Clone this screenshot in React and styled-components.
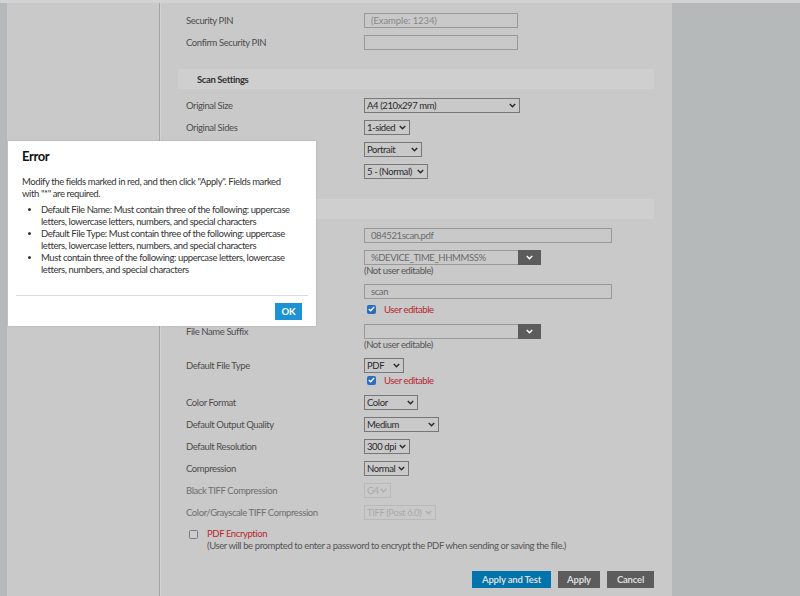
import React from 'react';
import styled, { createGlobalStyle } from 'styled-components';

const GlobalStyle = createGlobalStyle`
  html, body {
    margin: 0;
    padding: 0;
    background: #b6b9ba;
  }
  body {
    font-family: Lato, "Liberation Sans", Arial, sans-serif;
    font-size: 9.5px;
    letter-spacing: -0.4px;
  }
`;

const Root = styled.div`
  position: relative;
  width: 800px;
  height: 596px;
  overflow: hidden;
`;

const Page = styled.div`
  display: flex;
  height: 596px;
  box-sizing: border-box;
  border-top: 3px solid #d2d3d3;
  padding-left: 7px;
  background: #b6b9ba;
`;

const Nav = styled.div`
  width: 152px;
  background: #c9c9c9;
  border-right: 1px solid #a4a4a4;
`;

const Main = styled.div`
  width: 512px;
  box-sizing: border-box;
  padding: 7px 18px 0 17px;
  background: #c9c9c9;
  border-left: 1px solid #d3d3d3;
  display: flex;
  flex-direction: column;
`;

const Band = styled.div`
  height: 20px;
  margin: ${(p) => p.$top}px 0 6px;
  padding-left: 19px;
  display: flex;
  align-items: center;
  background: #cfcfcf;
  color: #333;
  font-weight: bold;
`;

const Row = styled.div`
  display: grid;
  grid-template-columns: 178px 1fr;
  padding: 3px 0 4px 8px;
  align-items: start;
`;

const Label = styled.div`
  height: 15px;
  line-height: 15px;
  color: ${(p) => (p.$muted ? '#6f6f6f' : '#4d4d4d')};
`;

const Field = styled.div`
  display: flex;
  flex-direction: column;
  align-items: flex-start;
`;

const TextBox = styled.div`
  width: ${(p) => p.$w}px;
  height: 15px;
  box-sizing: border-box;
  border: 1px solid #999;
  padding-left: 6px;
  line-height: 13px;
  color: ${(p) => (p.$placeholder ? '#878787' : '#6a6a6a')};
  letter-spacing: ${(p) => (p.$placeholder ? '-0.1px' : 'inherit')};
`;

const SelectBox = styled.div`
  width: ${(p) => p.$w}px;
  height: 15px;
  box-sizing: border-box;
  border: 1px solid ${(p) => (p.$disabled ? '#b9b9b9' : '#777')};
  padding: 0 3px 0 2px;
  display: flex;
  align-items: center;
  justify-content: space-between;
  color: ${(p) => (p.$disabled ? '#aaa' : '#2a2a2a')};
  white-space: nowrap;
`;

const Combo = styled.div`
  display: flex;
  width: 177px;
  height: 15px;
`;

const ComboText = styled.div`
  flex: 1;
  box-sizing: border-box;
  border: 1px solid #999;
  border-right: none;
  padding-left: 6px;
  line-height: 13px;
  color: #6a6a6a;
`;

const ComboButton = styled.div`
  width: 23px;
  background: #5c5c5c;
  display: flex;
  align-items: center;
  justify-content: center;
`;

const Note = styled.div`
  height: 12px;
  line-height: 12px;
  color: #555;
`;

const CheckLine = styled.div`
  height: 16px;
  margin-top: ${(p) => p.$mt}px;
  display: flex;
  align-items: center;
  gap: 8px;
  padding-left: 3px;
  color: #b8272e;
`;

const CheckBox = styled.span`
  width: 9px;
  height: 9px;
  box-sizing: border-box;
  border-radius: 1.5px;
  display: inline-flex;
  align-items: center;
  justify-content: center;
  background: ${(p) => (p.$checked ? '#2c6dbd' : '#cdcdcd')};
  border: 1px solid ${(p) => (p.$checked ? '#2c6dbd' : '#7b7b7b')};
  flex-shrink: 0;
`;

const Encrypt = styled.div`
  display: flex;
  gap: 9px;
  padding: 4px 0 0 11px;
  align-items: flex-start;

  & > span {
    margin-top: 2px;
  }
`;

const EncryptText = styled.div`
  line-height: 12px;
  color: #555;
`;

const Red = styled.div`
  color: #b8272e;
`;

const Buttons = styled.div`
  display: flex;
  justify-content: flex-end;
  gap: 7px;
  margin-top: 19px;
`;

const Button = styled.div`
  width: ${(p) => p.$w}px;
  height: 17px;
  display: flex;
  align-items: center;
  justify-content: center;
  background: ${(p) => (p.$primary ? '#0074ab' : '#5c5c5c')};
  color: #dcdcdc;
  font-weight: bold;
  letter-spacing: -0.2px;
`;

const Dialog = styled.div`
  position: absolute;
  left: 8px;
  top: 141px;
  width: 308px;
  background: #fff;
  box-shadow: 0 0 2px rgba(0, 0, 0, 0.15);
`;

const DialogBody = styled.div`
  padding: 7px 24px 0 14px;
`;

const Title = styled.div`
  font-size: 13px;
  line-height: 16px;
  font-weight: bold;
  color: #111;
`;

const Message = styled.p`
  margin: 12px 0 0;
  line-height: 12px;
  color: #333;
`;

const List = styled.ul`
  margin: 4px 0 0;
  padding-left: 19px;
  line-height: 12px;
  color: #333;
  li::marker {
    font-size: 9px;
  }
`;

const Divider = styled.div`
  height: 1px;
  margin: 19px 8px 0;
  background: #dcdcdc;
`;

const DialogFooter = styled.div`
  display: flex;
  justify-content: flex-end;
  padding: 7px 14px 6px;
`;

const OkButton = styled.div`
  width: 27px;
  height: 17px;
  display: flex;
  align-items: center;
  justify-content: center;
  background: #1d92d5;
  color: #fff;
  font-weight: bold;
  font-size: 9.5px;
  letter-spacing: 0;
`;

function Chevron({ color = '#2a2a2a' }) {
  return (
    <svg width="7" height="5" viewBox="0 0 7 5">
      <polyline points="0.8,1 3.5,3.7 6.2,1" fill="none" stroke={color} strokeWidth="1.5" />
    </svg>
  );
}

function Select({ w, children, disabled }) {
  return (
    <SelectBox $w={w} $disabled={disabled}>
      <span>{children}</span>
      <Chevron color={disabled ? '#adadad' : '#2a2a2a'} />
    </SelectBox>
  );
}

function Check({ checked }) {
  return (
    <CheckBox $checked={checked}>
      {checked && (
        <svg width="7" height="6" viewBox="0 0 7 6">
          <polyline points="0.8,3 2.7,4.8 6.2,0.9" fill="none" stroke="#fff" strokeWidth="1.4" />
        </svg>
      )}
    </CheckBox>
  );
}

function ComboField({ value }) {
  return (
    <Combo>
      <ComboText>{value}</ComboText>
      <ComboButton>
        <Chevron color="#fff" />
      </ComboButton>
    </Combo>
  );
}

export default function App() {
  return (
    <Root>
      <GlobalStyle />
      <Page>
        <Nav />
        <Main>
          <Row>
            <Label>Security PIN</Label>
            <TextBox $w={154} $placeholder>(Example: 1234)</TextBox>
          </Row>
          <Row>
            <Label>Confirm Security PIN</Label>
            <TextBox $w={154} />
          </Row>

          <Band $top={15}>Scan Settings</Band>
          <Row>
            <Label>Original Size</Label>
            <Select w={156}>A4 (210x297 mm)</Select>
          </Row>
          <Row>
            <Label>Original Sides</Label>
            <Select w={46}>1-sided</Select>
          </Row>
          {/* labels of the next rows sit under the dialog */}
          <Row>
            <Label />
            <Select w={58}>Portrait</Select>
          </Row>
          <Row>
            <Label />
            <Select w={64}>5 - (Normal)</Select>
          </Row>

          <Band $top={16} />
          <Row>
            <Label />
            <TextBox $w={248}>084521scan.pdf</TextBox>
          </Row>
          <Row>
            <Label />
            <Field>
              <ComboField value="%DEVICE_TIME_HHMMSS%" />
              <Note>(Not user editable)</Note>
            </Field>
          </Row>
          <Row>
            <Label />
            <Field>
              <TextBox $w={248}>scan</TextBox>
              <CheckLine $mt={2}>
                <Check checked />
                User editable
              </CheckLine>
            </Field>
          </Row>
          <Row>
            <Label>File Name Suffix</Label>
            <Field>
              <ComboField value="" />
              <Note>(Not user editable)</Note>
            </Field>
          </Row>
          <Row>
            <Label>Default File Type</Label>
            <Field>
              <Select w={40}>PDF</Select>
              <CheckLine $mt={-1}>
                <Check checked />
                User editable
              </CheckLine>
            </Field>
          </Row>
          <Row>
            <Label>Color Format</Label>
            <Select w={54}>Color</Select>
          </Row>
          <Row>
            <Label>Default Output Quality</Label>
            <Select w={75}>Medium</Select>
          </Row>
          <Row>
            <Label>Default Resolution</Label>
            <Select w={46}>300 dpi</Select>
          </Row>
          <Row>
            <Label>Compression</Label>
            <Select w={45}>Normal</Select>
          </Row>
          <Row>
            <Label $muted>Black TIFF Compression</Label>
            <Select w={27} disabled>G4</Select>
          </Row>
          <Row>
            <Label $muted>Color/Grayscale TIFF Compression</Label>
            <Select w={72} disabled>TIFF (Post 6.0)</Select>
          </Row>

          <Encrypt>
            <Check />
            <EncryptText>
              <Red>PDF Encryption</Red>
              (User will be prompted to enter a password to encrypt the PDF when sending or saving the file.)
            </EncryptText>
          </Encrypt>

          <Buttons>
            <Button $primary $w={79}>Apply and Test</Button>
            <Button $w={42}>Apply</Button>
            <Button $w={47}>Cancel</Button>
          </Buttons>
        </Main>
      </Page>

      <Dialog>
        <DialogBody>
          <Title>Error</Title>
          <Message>
            Modify the fields marked in red, and then click "Apply". Fields marked with "*" are required.
          </Message>
          <List>
            <li>Default File Name: Must contain three of the following: uppercase letters, lowercase letters, numbers, and special characters</li>
            <li>Default File Type: Must contain three of the following: uppercase letters, lowercase letters, numbers, and special characters</li>
            <li>Must contain three of the following: uppercase letters, lowercase letters, numbers, and special characters</li>
          </List>
        </DialogBody>
        <Divider />
        <DialogFooter>
          <OkButton>OK</OkButton>
        </DialogFooter>
      </Dialog>
    </Root>
  );
}
